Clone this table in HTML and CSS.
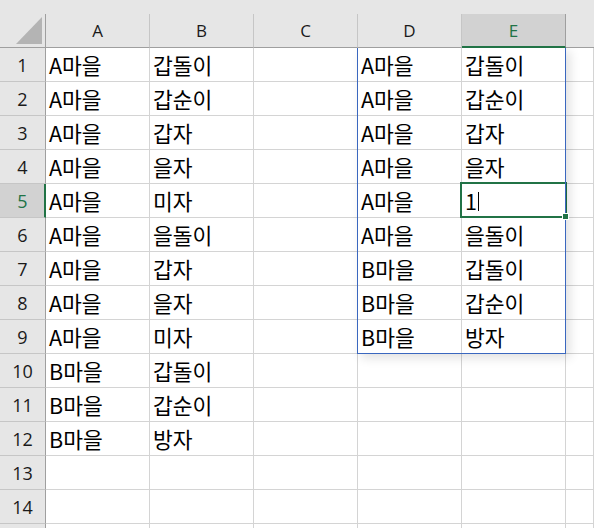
FILE: index.html
```html
<!DOCTYPE html>
<html lang="ko">
<head>
<meta charset="utf-8">
<link rel="stylesheet" href="styles.css">
</head>
<body>
<div class="sheet">
  <div class="grid">
    <div class="corner"><span class="tri"></span></div>
    <div class="ch"><span class="lbl">A</span></div><div class="ch"><span class="lbl">B</span></div><div class="ch"><span class="lbl">C</span></div><div class="ch"><span class="lbl">D</span></div><div class="ch active"><span class="lbl">E</span></div><div class="ch last"></div>

    <div class="rh">1</div><div class="c">A마을</div><div class="c">갑돌이</div><div class="c"></div><div class="c">A마을</div><div class="c">갑돌이</div><div class="c"></div>
    <div class="rh">2</div><div class="c">A마을</div><div class="c">갑순이</div><div class="c"></div><div class="c">A마을</div><div class="c">갑순이</div><div class="c"></div>
    <div class="rh">3</div><div class="c">A마을</div><div class="c">갑자</div><div class="c"></div><div class="c">A마을</div><div class="c">갑자</div><div class="c"></div>
    <div class="rh">4</div><div class="c">A마을</div><div class="c">을자</div><div class="c"></div><div class="c">A마을</div><div class="c">을자</div><div class="c"></div>
    <div class="rh active">5</div><div class="c">A마을</div><div class="c">미자</div><div class="c"></div><div class="c">A마을</div><div class="c sel">1<span class="caret"></span><span class="handle"></span></div><div class="c"></div>
    <div class="rh">6</div><div class="c">A마을</div><div class="c">을돌이</div><div class="c"></div><div class="c">A마을</div><div class="c">을돌이</div><div class="c"></div>
    <div class="rh">7</div><div class="c">A마을</div><div class="c">갑자</div><div class="c"></div><div class="c">B마을</div><div class="c">갑돌이</div><div class="c"></div>
    <div class="rh">8</div><div class="c">A마을</div><div class="c">을자</div><div class="c"></div><div class="c">B마을</div><div class="c">갑순이</div><div class="c"></div>
    <div class="rh">9</div><div class="c">A마을</div><div class="c">미자</div><div class="c"></div><div class="c">B마을</div><div class="c">방자</div><div class="c"></div>
    <div class="rh">10</div><div class="c">B마을</div><div class="c">갑돌이</div><div class="c"></div><div class="c"></div><div class="c"></div><div class="c"></div>
    <div class="rh">11</div><div class="c">B마을</div><div class="c">갑순이</div><div class="c"></div><div class="c"></div><div class="c"></div><div class="c"></div>
    <div class="rh">12</div><div class="c">B마을</div><div class="c">방자</div><div class="c"></div><div class="c"></div><div class="c"></div><div class="c"></div>
    <div class="rh">13</div><div class="c"></div><div class="c"></div><div class="c"></div><div class="c"></div><div class="c"></div><div class="c"></div>
    <div class="rh">14</div><div class="c"></div><div class="c"></div><div class="c"></div><div class="c"></div><div class="c"></div><div class="c"></div>
    <div class="rh"></div><div class="c"></div><div class="c"></div><div class="c"></div><div class="c"></div><div class="c"></div><div class="c"></div>

    <div class="float"></div>
  </div>
</div>
</body>
</html>
```

FILE: styles.css
```css
html, body {
  margin: 0;
  padding: 0;
}
body {
  width: 594px;
  height: 528px;
  overflow: hidden;
  background: #e6e6e6;
}
.sheet {
  padding-top: 14px;
}
.grid {
  position: relative;
  display: grid;
  grid-template-columns: 46px repeat(5, 104px) 1fr;
  grid-template-rows: 34px;
  grid-auto-rows: 34px;
  background: #ffffff;
}
.grid > div {
  box-sizing: border-box;
}
.corner {
  position: relative;
  z-index: 3;
  background: #e6e6e6;
  border-right: 1px solid #9f9f9f;
  border-bottom: 1px solid #9f9f9f;
}
.tri {
  position: absolute;
  left: 16px;
  top: 3px;
  width: 0;
  height: 0;
  border-left: 26px solid transparent;
  border-bottom: 27px solid #b4b4b4;
}
.ch {
  position: relative;
  z-index: 3;
  background: #e6e6e6;
  border-right: 1px solid #c6c6c6;
  border-bottom: 1px solid #9f9f9f;
  color: #1a1a1a;
  display: flex;
  align-items: center;
  justify-content: center;
  padding-top: 1px;
}
.lbl {
  font-family: "Open Sans", "Noto Sans", sans-serif;
  font-size: 17px;
  line-height: 20px;
}
.ch.active {
  background: #d2d2d2;
  color: #217346;
  border-right-color: #9f9f9f;
  border-bottom: 2px solid #217346;
  padding-top: 2px;
}
.ch.last {
  border-right: none;
}
.rh {
  background: #e6e6e6;
  border-right: 1px solid #9f9f9f;
  border-bottom: 1px solid #c6c6c6;
  font-family: "Open Sans", "Noto Sans", sans-serif;
  font-size: 18px;
  color: #1a1a1a;
  display: flex;
  align-items: center;
  justify-content: center;
  padding-top: 1px;
}
.rh.active {
  background: #d2d2d2;
  color: #217346;
  border-right: 2px solid #217346;
  padding-left: 1px;
}
.c {
  position: relative;
  border-right: 1px solid #d4d4d4;
  border-bottom: 1px solid #d4d4d4;
  font-family: "Noto Sans CJK KR", "Noto Sans", sans-serif;
  font-size: 21.5px;
  line-height: 34px;
  color: #000000;
  padding-left: 3px;
  white-space: nowrap;
}
.sel::after {
  content: "";
  position: absolute;
  left: -2px;
  top: -2px;
  width: 107px;
  height: 36px;
  box-sizing: border-box;
  border: 2px solid #217346;
  pointer-events: none;
}
.caret {
  position: absolute;
  left: 16px;
  top: 8px;
  width: 1px;
  height: 19px;
  background: #000000;
}
.handle {
  position: absolute;
  left: 100px;
  top: 29px;
  width: 5px;
  height: 5px;
  background: #217346;
  border: 1px solid #ffffff;
  z-index: 4;
}
.float {
  position: absolute;
  left: 357px;
  top: 33px;
  width: 209px;
  height: 307px;
  box-sizing: border-box;
  border: 1px solid #3a67bf;
  box-shadow: 4px 4px 10px rgba(0, 0, 0, 0.12);
  z-index: 2;
  pointer-events: none;
}
```
